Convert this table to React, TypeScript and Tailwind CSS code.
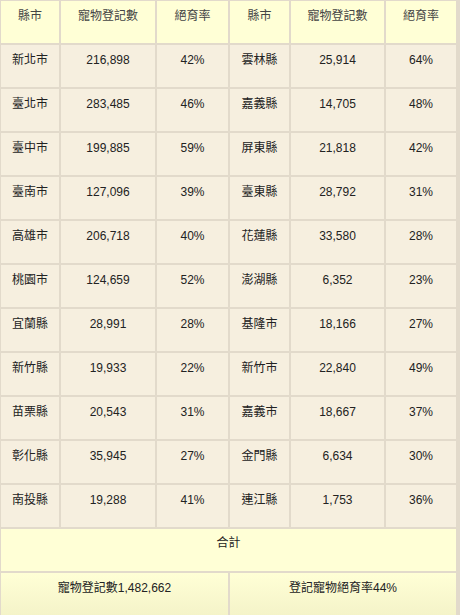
const rows: [string, string, string, string, string, string][] = [
    ["新北市", "216,898", "42%", "雲林縣", "25,914", "64%"],
    ["臺北市", "283,485", "46%", "嘉義縣", "14,705", "48%"],
    ["臺中市", "199,885", "59%", "屏東縣", "21,818", "42%"],
    ["臺南市", "127,096", "39%", "臺東縣", "28,792", "31%"],
    ["高雄市", "206,718", "40%", "花蓮縣", "33,580", "28%"],
    ["桃園市", "124,659", "52%", "澎湖縣", "6,352", "23%"],
    ["宜蘭縣", "28,991", "28%", "基隆市", "18,166", "27%"],
    ["新竹縣", "19,933", "22%", "新竹市", "22,840", "49%"],
    ["苗栗縣", "20,543", "31%", "嘉義市", "18,667", "37%"],
    ["彰化縣", "35,945", "27%", "金門縣", "6,634", "30%"],
    ["南投縣", "19,288", "41%", "連江縣", "1,753", "36%"],
]

const headers = ["縣市", "寵物登記數", "絕育率", "縣市", "寵物登記數", "絕育率"]

export default function App() {
    return (
        <div
            className="w-[460px] h-[615px] overflow-hidden bg-[#e2dacb] pl-px pt-px pr-[3px] text-[12px] text-center"
            style={{ fontFamily: '"Liberation Sans", "Noto Sans CJK TC", sans-serif' }}
        >
            <div className="grid grid-cols-[58px_94px_71px_59px_93px_70px] auto-rows-[42px] gap-[2px]">
                {headers.map((h, i) => (
                    <div key={"h" + i} className="bg-[#ffffd6] text-[#444] pt-[6px] leading-[18px]">
                        {h}
                    </div>
                ))}
                {rows.map((row, r) =>
                    row.map((cell, c) => (
                        <div key={r + "-" + c} className="bg-[#f6efdf] text-[#222] pt-[6px] leading-[18px]">
                            {cell}
                        </div>
                    ))
                )}
                <div className="col-span-6 bg-[#ffffd6] text-[#222] pt-[5px] leading-[18px]">合計</div>
                <div className="col-span-3 bg-gradient-to-b from-[#ffffd6] to-[#f4f3c8] text-[#222] pt-[6px] leading-[18px] h-[44px]">
                    寵物登記數1,482,662
                </div>
                <div className="col-span-3 bg-gradient-to-b from-[#ffffd6] to-[#f4f3c8] text-[#222] pt-[6px] leading-[18px] h-[44px]">
                    登記寵物絕育率44%
                </div>
            </div>
        </div>
    )
}
